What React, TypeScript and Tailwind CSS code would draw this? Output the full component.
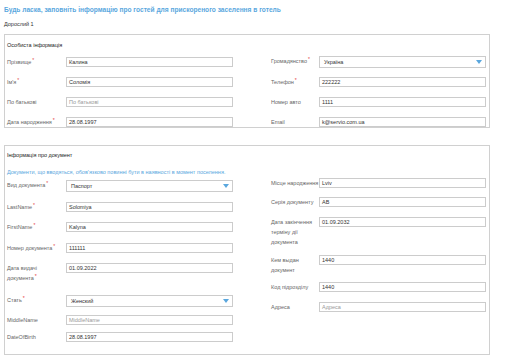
import React from "react";

type FieldProps = {
  label: React.ReactNode;
  req?: boolean;
  value?: string;
  placeholder?: string;
  select?: boolean;
  labelW: string;
  mt?: string;
};

function Req() {
  return <span className="relative -top-[2px] ml-[1px] text-[5px] text-[#e4393c]">*</span>;
}

function Field({ label, req, value, placeholder, select, labelW, mt }: FieldProps) {
  return (
    <div className={`flex items-start ${mt ?? ""}`}>
      <div className={`${labelW} shrink-0 whitespace-nowrap text-[5.5px] leading-[10px] text-[#666]`}>
        {label}
        {req && <Req />}
      </div>
      {select ? (
        <div className="flex h-[12px] w-[167px] items-center justify-between border border-[#ccc] bg-white pl-[4px] pr-[3px] text-[5.5px] text-[#333]">
          <span>{value}</span>
          <svg width="6" height="4" viewBox="0 0 6 4">
            <path d="M0 0 H6 L3 4 Z" fill="#5aa7de" />
          </svg>
        </div>
      ) : (
        <div
          className={`flex h-[10px] w-[167px] items-center border border-[#ccc] bg-white px-[2px] text-[5.5px] ${
            value ? "text-[#333]" : "text-[#999]"
          }`}
        >
          {value || placeholder}
        </div>
      )}
    </div>
  );
}

export default function App() {
  return (
    <div className="h-[361px] w-[512px] overflow-hidden bg-white font-['Liberation_Sans',Arial,sans-serif]">
      <div className="pl-[4px] pt-[6px] text-[6.6px] font-bold leading-[8px] text-[#5aa7de]">
        Будь ласка, заповніть інформацію про гостей для прискореного заселення в готель
      </div>
      <div className="mt-[6px] pl-[4px] text-[5.5px] leading-[8px] text-[#333]">Дорослий 1</div>

      {/* Panel 1 */}
      <div className="ml-[4px] mt-[6px] h-[94px] w-[486px] border border-[#d0d0d0] pl-[2px]">
        <div className="mt-[6px] text-[5.5px] leading-[8px] text-[#222]">Особиста інформація</div>
        <div className="mt-[8px] flex flex-col gap-[10px]">
          {[
            [
              { label: "Прізвище", req: true, value: "Калина" },
              { label: "Громадянство", req: true, value: "Україна", select: true },
            ],
            [
              { label: "Ім'я", req: true, value: "Соломія" },
              { label: "Телефон", req: true, value: "222222" },
            ],
            [
              { label: "По батькові", placeholder: "По батькові" },
              { label: "Номер авто", value: "1111" },
            ],
            [
              { label: "Дата народження", req: true, value: "28.08.1997" },
              { label: "Email", value: "k@servio.com.ua" },
            ],
          ].map((row, i) => (
            <div key={i} className="flex h-[10px] items-center">
              <div className="w-[226px]">
                <Field labelW="w-[59px]" {...row[0]} />
              </div>
              <div className="ml-[38px]">
                <Field labelW="w-[48px]" {...row[1]} />
              </div>
            </div>
          ))}
        </div>
      </div>

      {/* Panel 2 */}
      <div className="ml-[4px] mt-[17px] h-[210px] w-[486px] border border-[#d0d0d0] pl-[2px]">
        <div className="mt-[5px] text-[5.5px] leading-[8px] text-[#222]">Інформація про документ</div>
        <div className="mt-[9px] text-[5.5px] leading-[8px] text-[#5aa7de]">
          Документи, що вводяться, обов'язково повинні бути в наявності в момент поселення.
        </div>
        <div className="flex items-start">
          <div className="flex w-[226px] flex-col">
            <Field labelW="w-[59px]" mt="mt-[4px]" label="Вид документа" req value="Паспорт" select />
            <Field labelW="w-[59px]" mt="mt-[10px]" label="LastName" req value="Solomiya" />
            <Field labelW="w-[59px]" mt="mt-[10px]" label="FirstName" req value="Kalyna" />
            <Field labelW="w-[59px]" mt="mt-[11px]" label="Номер документа" req value="111111" />
            <Field
              labelW="w-[59px]"
              mt="mt-[10px]"
              label={
                <>
                  Дата видачі
                  <br />
                  документа
                </>
              }
              req
              value="01.09.2022"
            />
            <Field labelW="w-[59px]" mt="mt-[12px]" label="Стать" req value="Женский" select />
            <Field labelW="w-[59px]" mt="mt-[8px]" label="MiddleName" placeholder="MiddleName" />
            <Field labelW="w-[59px]" mt="mt-[7px]" label="DateOfBirth" value="28.08.1997" />
          </div>
          <div className="ml-[38px] flex flex-col">
            <Field labelW="w-[48px]" mt="mt-[2px]" label="Місце народження" value="Lviv" />
            <Field labelW="w-[48px]" mt="mt-[9px]" label="Серія документу" value="AB" />
            <Field
              labelW="w-[48px]"
              mt="mt-[10px]"
              label={
                <>
                  Дата закінчення
                  <br />
                  терміну дії
                  <br />
                  документа
                </>
              }
              value="01.09.2032"
            />
            <Field
              labelW="w-[48px]"
              mt="mt-[8px]"
              label={
                <>
                  Кем выдан
                  <br />
                  документ
                </>
              }
              value="1440"
            />
            <Field labelW="w-[48px]" mt="mt-[7px]" label="Код підрозділу" value="1440" />
            <Field labelW="w-[48px]" mt="mt-[10px]" label="Адреса" placeholder="Адреса" />
          </div>
        </div>
      </div>
    </div>
  );
}
